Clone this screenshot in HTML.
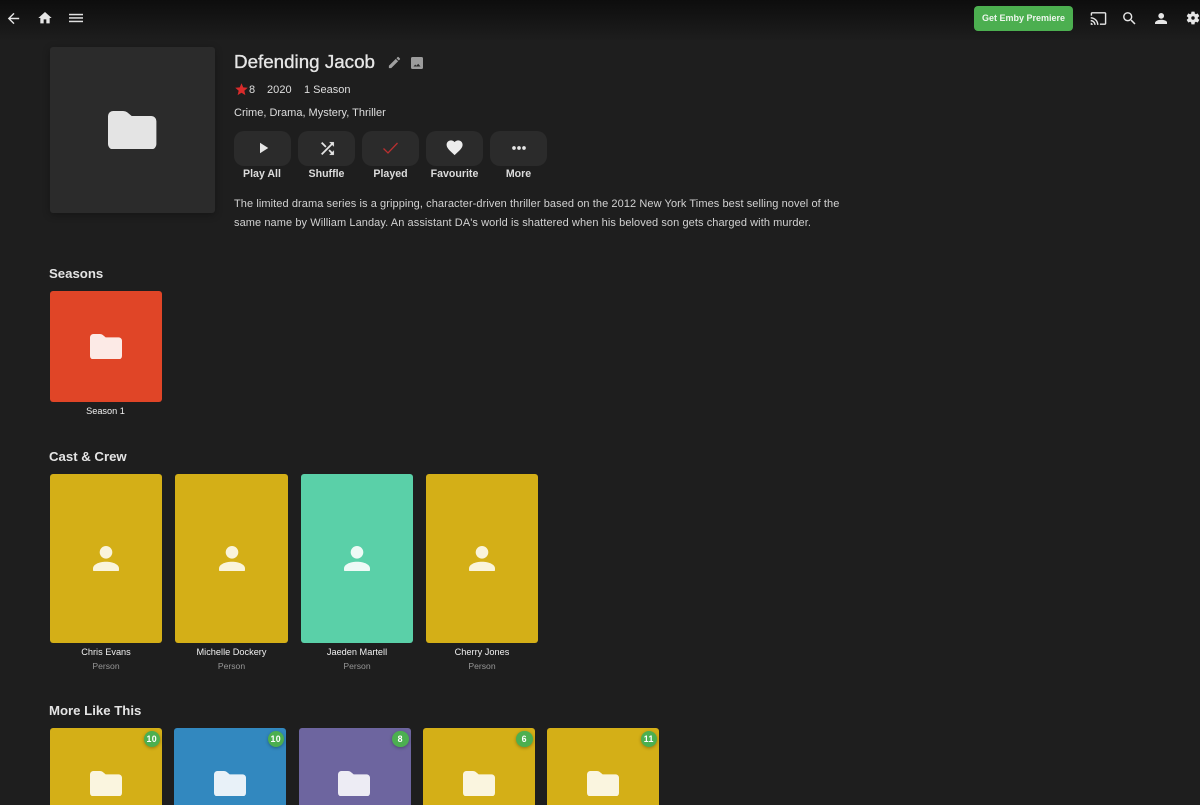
<!DOCTYPE html>
<html><head><meta charset="utf-8"><style>
*{box-sizing:border-box}
html,body{margin:0;padding:0;width:1200px;height:805px;overflow:hidden;background:#1e1e1e}
body{position:relative;font-family:"Liberation Sans",sans-serif;color:#e6e6e6}
.a{position:absolute;white-space:nowrap}
.top{position:absolute;left:0;top:0;width:1200px;height:42px;background:linear-gradient(#0d0d0d,#1e1e1e)}
svg{position:absolute;display:block}
.c{position:absolute;border-radius:3px}
.h{position:absolute;left:49px;font-size:13.2px;line-height:16px;font-weight:bold;color:#e4e4e4;white-space:nowrap}
.b{position:absolute;top:131px;width:57px;height:35px;border-radius:10px;background:#2b2b2b}
.l{position:absolute;top:168px;font-size:10.6px;line-height:13px;font-weight:bold;color:#dcdcdc;text-align:center;width:80px;white-space:nowrap}
.n{position:absolute;text-align:center;font-size:9.2px;line-height:11px;color:#f0f0f0;width:113px;white-space:nowrap}
.p{position:absolute;text-align:center;font-size:8.6px;line-height:10px;color:#969696;width:113px;top:661px}
.bd{position:absolute;top:730.500px;width:16.500px;height:16.500px;border-radius:50%;background:#4caf50;color:#fff;font-size:8.800px;letter-spacing:.4px;font-weight:bold;text-align:center;line-height:16.500px;box-shadow:0 1px 3px rgba(0,0,0,.3)}
.d{font-size:11px;line-height:14px;color:#d2d2d2;letter-spacing:.08px}
</style></head><body>
<div class="top"></div>
<svg style="left:5px;top:10px" width="17" height="17" viewBox="0 0 24 24" fill="#e6e6e6"><path d="M20 11H7.830l5.590-5.590L12 4l-8 8 8 8 1.410-1.410L7.830 13H20z"/></svg>
<svg style="left:36.500px;top:10px" width="16" height="16" viewBox="0 0 24 24" fill="#e6e6e6"><path d="M10 20v-6h4v6h5v-8h3L12 3 2 12h3v8z"/></svg>
<svg style="left:69px;top:13px" width="14" height="10" viewBox="0 0 14 10" fill="#e0e0e0"><rect x="0" y="0.8" width="14" height="1.5"/><rect x="0" y="4.2" width="14" height="1.5"/><rect x="0" y="7.7" width="14" height="1.5"/></svg>

<div class="a" style="left:974px;top:6px;width:99px;height:25px;background:#4caf50;border-radius:4px;color:#eef7ee;font-size:9px;font-weight:bold;text-align:center;line-height:24px">Get Emby Premiere</div>
<svg style="left:1090px;top:9.500px" width="17" height="17" viewBox="0 0 24 24" fill="#e6e6e6"><path d="M21 3H3c-1.100 0-2 .9-2 2v3h2V5h18v14h-7v2h7c1.100 0 2-.9 2-2V5c0-1.100-.9-2-2-2zM1 18v3h3c0-1.660-1.340-3-3-3zm0-4v2c2.760 0 5 2.240 5 5h2c0-3.870-3.130-7-7-7zm0-4v2c4.970 0 9 4.030 9 9h2c0-6.080-4.930-11-11-11z"/></svg>
<svg style="left:1121px;top:10px" width="17" height="17" viewBox="0 0 24 24" fill="#e6e6e6"><path d="M15.500 14h-.79l-.28-.27C15.410 12.590 16 11.110 16 9.500 16 5.910 13.090 3 9.500 3S3 5.910 3 9.500 5.910 16 9.500 16c1.610 0 3.090-.59 4.230-1.570l.27.28v.79l5 4.990L20.490 19l-4.990-5zm-6 0C7.010 14 5 11.990 5 9.500S7.010 5 9.500 5 14 7.010 14 9.500 11.990 14 9.500 14z"/></svg>
<svg style="left:1155px;top:12.500px" width="12.400" height="11.500" viewBox="0 0 26 24" fill="#e6e6e6"><circle cx="13" cy="6" r="6"/><path d="M0 21C0 17 6 14 13 14S26 17 26 21V22a2 2 0 0 1-2 2H2a2 2 0 0 1-2-2z"/></svg>
<svg style="left:1184.500px;top:10px" width="16" height="16" viewBox="0 0 24 24" fill="#e6e6e6"><path d="M19.140 12.940c.04-.3.06-.61.06-.94 0-.32-.02-.64-.07-.94l2.030-1.580c.18-.14.23-.41.12-.61l-1.920-3.320c-.12-.22-.37-.29-.59-.22l-2.390.96c-.5-.38-1.030-.7-1.620-.94l-.36-2.540c-.04-.24-.24-.41-.48-.41h-3.840c-.24 0-.43.170-.47.410l-.36 2.540c-.59.24-1.130.570-1.620.94l-2.390-.96c-.22-.08-.47 0-.59.22L2.740 8.870c-.12.210-.08.470.12.610l2.030 1.580c-.05.3-.09.630-.09.940s.02.640.07.940l-2.030 1.580c-.18.140-.23.410-.12.610l1.920 3.320c.12.220.37.290.59.220l2.390-.96c.5.380 1.030.7 1.620.94l.36 2.540c.05.240.24.410.48.410h3.840c.24 0 .44-.17.470-.41l.36-2.540c.59-.24 1.130-.56 1.620-.94l2.390.96c.22.080.47 0 .59-.22l1.920-3.320c.12-.22.070-.47-.12-.61l-2.010-1.580z"/><circle cx="12" cy="12" r="2.600" fill="#141414"/></svg>

<!-- poster -->
<div class="c" style="left:50px;top:47px;width:165px;height:166px;background:#2b2b2b;box-shadow:0 2px 8px rgba(0,0,0,.3)"></div>
<svg style="left:108.300px;top:111px" width="48.400" height="38.300" viewBox="0 0 48 38" fill="#e4e4e4"><path d="M5 0H15q2.500 0 4 1.300L23.500 5H43a5 5 0 0 1 5 5V33a5 5 0 0 1-5 5H5a5 5 0 0 1-5-5V5a5 5 0 0 1 5-5z"/></svg>

<div class="a" style="left:234px;top:50px;font-size:18.800px;color:#e6e6e6;-webkit-text-stroke:.35px #e6e6e6;line-height:23px">Defending Jacob</div>
<svg style="left:387px;top:55px" width="15" height="15" viewBox="0 0 24 24" fill="#a0a0a0"><path d="M3 17.250V21h3.750L17.810 9.940l-3.750-3.750L3 17.250zM20.710 7.040c.39-.39.39-1.020 0-1.410l-2.340-2.340c-.39-.39-1.020-.39-1.410 0l-1.830 1.830 3.750 3.750 1.830-1.830z"/></svg>
<svg style="left:411px;top:56.500px" width="12" height="12" viewBox="0 0 12 12"><rect width="12" height="12" rx="1.500" fill="#9c9c9c"/><path d="M2.500 9.500L4.200 7.500 5.400 8.700 7.200 6.700 9.500 9.500z" fill="#2a2a2a"/></svg>

<svg style="left:234px;top:81.500px" width="15" height="15" viewBox="0 0 24 24" fill="#d92b2b"><path d="M12 17.270L18.180 21l-1.640-7.030L22 9.240l-7.190-.61L12 2 9.190 8.630 2 9.240l5.460 4.730L5.820 21z"/></svg>
<div class="a" style="left:249px;top:84px;font-size:11px;line-height:13px;color:#dedede">8</div>
<div class="a" style="left:267px;top:84px;font-size:11px;line-height:13px;color:#dedede;letter-spacing:.05px">2020</div>
<div class="a" style="left:304px;top:84px;font-size:11px;line-height:13px;color:#dedede">1 Season</div>
<div class="a" style="left:234px;top:107px;font-size:11px;line-height:13px;color:#dedede">Crime, Drama, Mystery, Thriller</div>

<div class="b" style="left:234px"></div>
<div class="b" style="left:298px"></div>
<div class="b" style="left:362px"></div>
<div class="b" style="left:426px"></div>
<div class="b" style="left:490px"></div>
<svg style="left:254px;top:139px" width="18" height="18" viewBox="0 0 24 24" fill="#e6e6e6"><path d="M8 5v14l11-7z"/></svg>
<svg style="left:317.500px;top:138.500px" width="19" height="19" viewBox="0 0 24 24" fill="#e6e6e6" stroke="#e6e6e6" stroke-width=".4"><path d="M10.590 9.170L5.410 4 4 5.410l5.170 5.170 1.420-1.410zM14.500 4l2.040 2.040L4 18.590 5.410 20 17.960 7.460 20 9.500V4h-5.500zm.33 9.410l-1.410 1.410 3.130 3.130L14.500 20H20v-5.500l-2.040 2.040-3.130-3.130z"/></svg>
<svg style="left:380px;top:138px" width="20" height="20" viewBox="0 0 20 20" fill="none" stroke="#b83030" stroke-width="1.300"><path d="M3.500 10.500L8 15 17.500 5"/></svg>
<svg style="left:445.400px;top:138.200px" width="19.200" height="19.200" viewBox="0 0 24 24" fill="#ececec"><path d="M12 21.350l-1.450-1.320C5.400 15.360 2 12.280 2 8.500 2 5.420 4.420 3 7.500 3c1.740 0 3.410.81 4.500 2.090C13.090 3.810 14.760 3 16.500 3 19.580 3 22 5.420 22 8.500c0 3.780-3.400 6.860-8.550 11.540L12 21.350z"/></svg>
<svg style="left:508.500px;top:138px" width="20" height="20" viewBox="0 0 24 24" fill="#e6e6e6"><circle cx="6" cy="12" r="2.200"/><circle cx="12" cy="12" r="2.200"/><circle cx="18" cy="12" r="2.200"/></svg>
<div class="l" style="left:222px">Play All</div>
<div class="l" style="left:286.500px">Shuffle</div>
<div class="l" style="left:350.500px">Played</div>
<div class="l" style="left:414.500px">Favourite</div>
<div class="l" style="left:478.500px">More</div>

<div class="a d" style="left:234px;top:197px">The limited drama series is a gripping, character-driven thriller based on the 2012 New York Times best selling novel of the</div>
<div class="a d" style="left:234px;top:216px">same name by William Landay. An assistant DA's world is shattered when his beloved son gets charged with murder.</div>

<div class="h" style="top:266px">Seasons</div>
<div class="c" style="left:50px;top:291px;width:112px;height:111px;background:#e04527"></div>
<svg style="left:90px;top:334px" width="32" height="25.400" viewBox="0 0 48 38" fill="#fceae6"><path d="M5 0H15q2.500 0 4 1.300L23.500 5H43a5 5 0 0 1 5 5V33a5 5 0 0 1-5 5H5a5 5 0 0 1-5-5V5a5 5 0 0 1 5-5z"/></svg>
<div class="n" style="left:49px;top:406px">Season 1</div>

<div class="h" style="top:449px">Cast &amp; Crew</div>
<div class="c" style="left:50px;top:474px;width:112px;height:169px;background:#d4af17"></div>
<div class="c" style="left:175px;top:474px;width:113px;height:169px;background:#d4af17"></div>
<div class="c" style="left:301px;top:474px;width:112px;height:169px;background:#5ad0a8"></div>
<div class="c" style="left:426px;top:474px;width:112px;height:169px;background:#d4af17"></div>
<svg style="left:93.300px;top:545.700px" width="26" height="25.700" viewBox="0 0 26 25.700" fill="#faf4db"><circle cx="13" cy="6.300" r="6.300"/><path d="M0 22.500C0 18.500 6 15.800 13 15.800S26 18.500 26 22.500V23.700a2 2 0 0 1-2 2H2a2 2 0 0 1-2-2z"/></svg>
<svg style="left:218.500px;top:545.700px" width="26" height="25.700" viewBox="0 0 26 25.700" fill="#faf4db"><circle cx="13" cy="6.300" r="6.300"/><path d="M0 22.500C0 18.500 6 15.800 13 15.800S26 18.500 26 22.500V23.700a2 2 0 0 1-2 2H2a2 2 0 0 1-2-2z"/></svg>
<svg style="left:344px;top:545.700px" width="26" height="25.700" viewBox="0 0 26 25.700" fill="#eefaf6"><circle cx="13" cy="6.300" r="6.300"/><path d="M0 22.500C0 18.500 6 15.800 13 15.800S26 18.500 26 22.500V23.700a2 2 0 0 1-2 2H2a2 2 0 0 1-2-2z"/></svg>
<svg style="left:469px;top:545.700px" width="26" height="25.700" viewBox="0 0 26 25.700" fill="#faf4db"><circle cx="13" cy="6.300" r="6.300"/><path d="M0 22.500C0 18.500 6 15.800 13 15.800S26 18.500 26 22.500V23.700a2 2 0 0 1-2 2H2a2 2 0 0 1-2-2z"/></svg>
<div class="n" style="left:49.500px;top:647px">Chris Evans</div>
<div class="n" style="left:175px;top:647px">Michelle Dockery</div>
<div class="n" style="left:300.500px;top:647px">Jaeden Martell</div>
<div class="n" style="left:425.500px;top:647px">Cherry Jones</div>
<div class="p" style="left:49.500px">Person</div>
<div class="p" style="left:175px">Person</div>
<div class="p" style="left:300.500px">Person</div>
<div class="p" style="left:425.500px">Person</div>

<div class="h" style="top:703px">More Like This</div>
<div class="c" style="left:50px;top:728px;width:112px;height:90px;background:#d4af17"></div>
<div class="c" style="left:174px;top:728px;width:112px;height:90px;background:#3288bf"></div>
<div class="c" style="left:299px;top:728px;width:112px;height:90px;background:#6d659f"></div>
<div class="c" style="left:423px;top:728px;width:112px;height:90px;background:#d4af17"></div>
<div class="c" style="left:547px;top:728px;width:112px;height:90px;background:#d4af17"></div>
<svg style="left:90px;top:771px" width="32" height="25.400" viewBox="0 0 48 38" fill="#faf5df"><path d="M5 0H15q2.500 0 4 1.300L23.500 5H43a5 5 0 0 1 5 5V33a5 5 0 0 1-5 5H5a5 5 0 0 1-5-5V5a5 5 0 0 1 5-5z"/></svg>
<svg style="left:214px;top:771px" width="32" height="25.400" viewBox="0 0 48 38" fill="#e8f1f8"><path d="M5 0H15q2.500 0 4 1.300L23.500 5H43a5 5 0 0 1 5 5V33a5 5 0 0 1-5 5H5a5 5 0 0 1-5-5V5a5 5 0 0 1 5-5z"/></svg>
<svg style="left:338.400px;top:771px" width="32" height="25.400" viewBox="0 0 48 38" fill="#edecf4"><path d="M5 0H15q2.500 0 4 1.300L23.500 5H43a5 5 0 0 1 5 5V33a5 5 0 0 1-5 5H5a5 5 0 0 1-5-5V5a5 5 0 0 1 5-5z"/></svg>
<svg style="left:462.800px;top:771px" width="32" height="25.400" viewBox="0 0 48 38" fill="#faf5df"><path d="M5 0H15q2.500 0 4 1.300L23.500 5H43a5 5 0 0 1 5 5V33a5 5 0 0 1-5 5H5a5 5 0 0 1-5-5V5a5 5 0 0 1 5-5z"/></svg>
<svg style="left:587.300px;top:771px" width="32" height="25.400" viewBox="0 0 48 38" fill="#faf5df"><path d="M5 0H15q2.500 0 4 1.300L23.500 5H43a5 5 0 0 1 5 5V33a5 5 0 0 1-5 5H5a5 5 0 0 1-5-5V5a5 5 0 0 1 5-5z"/></svg>
<div class="bd" style="left:143.500px">10</div>
<div class="bd" style="left:267.500px">10</div>
<div class="bd" style="left:392px">8</div>
<div class="bd" style="left:516px">6</div>
<div class="bd" style="left:640.500px">11</div>
</body></html>
